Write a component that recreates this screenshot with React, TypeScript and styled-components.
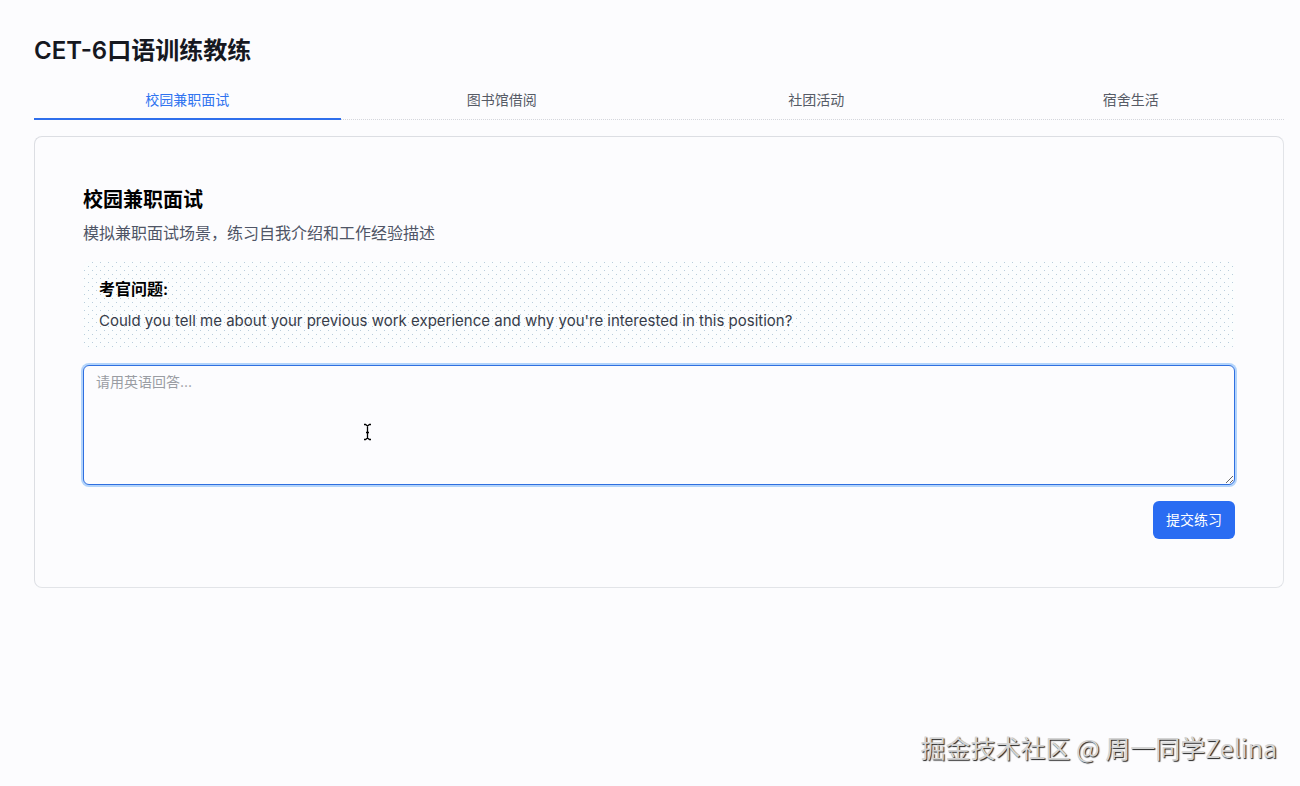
import React, { useState } from "react";
import styled, { createGlobalStyle } from "styled-components";

const GlobalStyle = createGlobalStyle`
  *, *::before, *::after { box-sizing: border-box; }
  body {
    margin: 0;
    background: #fcfcfe;
    color: #000;
    font-family: Inter, "Noto Sans CJK SC", sans-serif;
    font-size: 16px;
    line-height: 24px;
  }
  h1, h2, h3, p { margin: 0; }
  button, textarea { font: inherit; }
`;

const Page = styled.div`
  position: relative;
  min-height: 100vh;
  padding: 35px 16px 34px 34px;
`;

const Title = styled.h1`
  font-size: 24px;
  line-height: 32px;
  font-weight: 600;
  color: #16181f;
`;

const TabList = styled.div`
  display: grid;
  grid-template-columns: repeat(4, 1fr);
  column-gap: 8px;
  margin-top: 15px;
  border-bottom: 1px dotted #d4d6dc;
`;

const Tab = styled.button<{ $active: boolean }>`
  height: 38px;
  margin-bottom: -1px;
  padding: 0;
  border: 0;
  border-bottom: 2px solid ${(p) => (p.$active ? "#2f6fec" : "transparent")};
  background: none;
  color: ${(p) => (p.$active ? "#2f73f0" : "#565b66")};
  font-size: 14px;
  line-height: 20px;
  cursor: pointer;
`;

const Card = styled.main`
  margin-top: 16px;
  padding: 48px;
  border: 1px solid;
  border-color: #dcdee3 #e2e4e8 #e2e4e8 #dcdee3;
  border-radius: 8px;
`;

const SceneTitle = styled.h2`
  font-size: 20px;
  line-height: 30px;
  font-weight: 600;
`;

const SceneText = styled.p`
  margin-top: 6px;
  color: #4f5566;
`;

/* One-pixel dots on a staggered 8px grid */
const Question = styled.section`
  margin-top: 16px;
  padding: 16px;
  border-radius: 8px;
  background-color: #fbfdfe;
  background-image: conic-gradient(at 1px 1px, transparent 75%, #b9cddc 0),
    conic-gradient(at 1px 1px, transparent 75%, #b9cddc 0);
  background-size: 8px 8px;
  background-position: 1px 1px, 5px 5px;
`;

const QuestionTitle = styled.h3`
  font-size: 16px;
  line-height: 24px;
  font-weight: 600;
`;

const QuestionText = styled.p`
  margin-top: 8px;
  color: #373c49;
  font-size: 15px;
`;

const Answer = styled.textarea`
  display: block;
  width: 100%;
  height: 120px;
  margin-top: 16px;
  padding: 6px 12px;
  border: 1px solid #2f6fe0;
  border-radius: 6px;
  outline: none;
  background: #fcfcfe;
  box-shadow: 0 0 0 2px #b3d4fb;
  font-size: 14px;
  line-height: 20px;
  resize: vertical;
  &::placeholder { color: #9a9da3; opacity: 1; }
`;

const Actions = styled.div`
  display: flex;
  justify-content: flex-end;
  margin-top: 16px;
`;

const Submit = styled.button`
  height: 38px;
  padding: 0 13px;
  border: 0;
  border-radius: 6px;
  background: #2a6cf2;
  color: #fff;
  font-size: 14px;
  line-height: 20px;
  cursor: pointer;
`;

const Watermark = styled.div`
  position: absolute;
  right: 23px;
  bottom: 21px;
  color: #d4d4d4;
  font-family: "Noto Sans CJK SC", sans-serif;
  font-size: 25px;
  line-height: 36px;
  text-shadow: 1px 1px 1px #222;
  white-space: nowrap;
`;

const Pointer = styled.svg`
  position: absolute;
  left: 363px;
  top: 423px;
  pointer-events: none;
`;

const scenes = ["校园兼职面试", "图书馆借阅", "社团活动", "宿舍生活"];

export default function App() {
  const [active, setActive] = useState(0);
  return (
    <Page>
      <GlobalStyle />
      <Title>CET-6口语训练教练</Title>
      <TabList role="tablist">
        {scenes.map((name, i) => (
          <Tab
            key={name}
            type="button"
            role="tab"
            aria-selected={i === active}
            $active={i === active}
            onClick={() => setActive(i)}
          >
            {name}
          </Tab>
        ))}
      </TabList>
      <Card>
        <SceneTitle>{scenes[active]}</SceneTitle>
        <SceneText>模拟兼职面试场景，练习自我介绍和工作经验描述</SceneText>
        <Question>
          <QuestionTitle id="question">考官问题:</QuestionTitle>
          <QuestionText>
            Could you tell me about your previous work experience and why you're interested in this position?
          </QuestionText>
        </Question>
        <Answer aria-labelledby="question" placeholder="请用英语回答..." />
        <Actions>
          <Submit type="button">提交练习</Submit>
        </Actions>
      </Card>
      <Pointer width="9" height="18" viewBox="0 0 9 18" fill="none" stroke="#000" strokeWidth="1.3" aria-hidden="true">
        <path d="M1 1.5h1.5l2 1.5 2-1.5H8M4.5 3v12M1 16.5h1.5l2-1.5 2 1.5H8M3 9.5h3" />
      </Pointer>
      <Watermark>掘金技术社区 @ 周一同学Zelina</Watermark>
    </Page>
  );
}
